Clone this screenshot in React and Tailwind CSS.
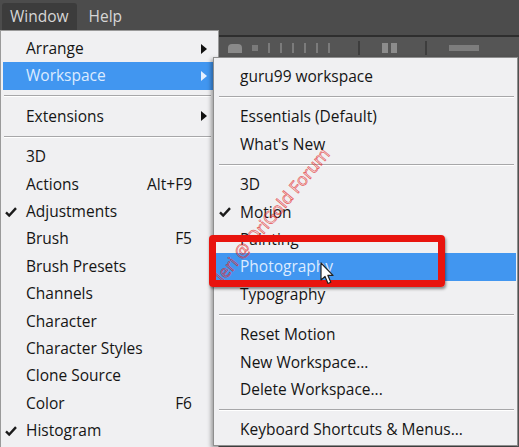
import React from 'react';

const font = { fontFamily: '"Open Sans", "Noto Sans", sans-serif' };

const mainItems = [
  { label: 'Arrange', sub: true },
  { label: 'Workspace', sub: true, active: true },
  'sep',
  { label: 'Extensions', sub: true },
  'sep',
  { label: '3D' },
  { label: 'Actions', key: 'Alt+F9' },
  { label: 'Adjustments', checked: true },
  { label: 'Brush', key: 'F5' },
  { label: 'Brush Presets' },
  { label: 'Channels' },
  { label: 'Character' },
  { label: 'Character Styles' },
  { label: 'Clone Source' },
  { label: 'Color', key: 'F6' },
  { label: 'Histogram', checked: true },
];

const workspaceItems = [
  { label: 'guru99 workspace' },
  'sep',
  { label: 'Essentials (Default)' },
  { label: "What's New" },
  'sep',
  { label: '3D' },
  { label: 'Motion', checked: true },
  { label: 'Painting' },
  { label: 'Photography', active: true },
  { label: 'Typography' },
  'sep',
  { label: 'Reset Motion' },
  { label: 'New Workspace...' },
  { label: 'Delete Workspace...' },
  'sep',
  { label: 'Keyboard Shortcuts & Menus...' },
];

function Check({ light, pos }) {
  return (
    <svg width="12" height="11" viewBox="0 0 12 11" className={`absolute ${pos} top-1/2 -translate-y-1/2`}>
      <path d="M1 5.8 L4.2 9 L11 1.6" fill="none" stroke={light ? '#eaf2ff' : '#1b1b1b'} strokeWidth="2.4" />
    </svg>
  );
}

function Arrow({ light }) {
  return (
    <svg width="6" height="10" viewBox="0 0 6 10">
      <path d="M0 0 L6 5 L0 10 Z" fill={light ? '#e6f0ff' : '#111'} />
    </svg>
  );
}

function Separator({ inset }) {
  return (
    <div className={`h-[13px] flex items-center ${inset}`}>
      <div className="w-full border-t border-[#a7a7a9] border-b border-b-white" />
    </div>
  );
}

function Row({ item, main }) {
  return (
    <div
      className={`relative flex items-center h-[27.4px] text-[15.5px] ${main ? 'pl-[23px]' : 'pl-[26px]'} ${
        item.active ? 'bg-[#4196f0] text-[#dcebff]' : 'text-[#151515]'
      }`}
    >
      {item.checked && <Check light={item.active} pos={main ? 'left-[2px]' : 'left-[5px]'} />}
      <span className="flex-1 whitespace-nowrap">{item.label}</span>
      {item.key && <span className="whitespace-nowrap">{item.key}</span>}
      {main && (
        <span className="w-[24px] flex items-center pl-[9px]">{item.sub && <Arrow light={item.active} />}</span>
      )}
    </div>
  );
}

export default function App() {
  return (
    <div className="relative w-[519px] h-[447px] overflow-hidden bg-[#545454]" style={font}>
      {/* menu bar */}
      <div className="h-[35px] bg-[#4c4c4c] flex items-start pt-[3px] pl-[2px] gap-[6px] text-[15.5px] text-[#d6d6d6]">
        <div className="h-[27px] px-[8px] flex items-center bg-[#3c3c3c] rounded-t-[3px]">Window</div>
        <div className="h-[27px] px-[6px] flex items-center">Help</div>
      </div>
      <div className="h-[2px] bg-[#2e2e2e]" />

      {/* options bar, mostly hidden behind the menus */}
      <div className="h-[22px] bg-[#555555] flex items-center pl-[228px] gap-[10px]">
        <div className="w-[14px] h-[9px] bg-[#8a8a8a] rounded-t-[4px]" />
        <div className="w-[6px] h-[6px] bg-[#7a7a7a]" />
        <div className="w-[14px] h-[10px] border-x-2 border-[#7b7b7b]" />
        <div className="w-[14px] h-[10px] border-x-2 border-[#7b7b7b]" />
        <div className="w-[14px] h-[10px] border-x-2 border-[#7b7b7b]" />
        <div className="w-[2px] h-[14px] bg-[#3d3d3d] ml-[18px]" />
        <div className="w-[6px] h-[10px] bg-[#8c8c8c] ml-[12px]" />
        <div className="w-[6px] h-[10px] bg-[#8c8c8c] -ml-[7px]" />
        <div className="w-[2px] h-[14px] bg-[#3d3d3d] ml-[18px]" />
        <div className="w-[30px] h-[6px] bg-[#7d7d7d] ml-[12px]" />
      </div>

      {/* Window menu */}
      <div className="absolute left-0 top-[30px] w-[219px] h-[420px] bg-[#f0f0f2] border border-[#9a9a9a] pt-[4px] px-[2px]">
        {mainItems.map((item, i) =>
          item === 'sep' ? <Separator key={i} inset="pl-[1px] pr-[5px]" /> : <Row key={i} item={item} main />
        )}
      </div>

      {/* Workspace submenu */}
      <div className="absolute left-[213px] top-[57px] w-[305px] h-[389px] bg-[#f0f0f2] border border-[#8e8e8e] shadow-[-2px_2px_4px_rgba(0,0,0,0.35)] pt-[5px] pr-[1px]">
        {workspaceItems.map((item, i) =>
          item === 'sep' ? <Separator key={i} inset="pl-[5px] pr-[2px]" /> : <Row key={i} item={item} />
        )}
      </div>

      {/* watermark */}
      <div className="absolute left-[162px] top-[202px] w-[220px] text-center text-[17px] whitespace-nowrap -rotate-[50deg] text-transparent [-webkit-text-stroke:0.7px_rgba(228,40,40,0.75)]">
        Jeri @ OriGold Forum
      </div>

      {/* callout box */}
      <div className="absolute left-[209px] top-[235px] w-[236px] h-[52px] border-[7px] border-[#e8140e] rounded-[4px] shadow-[1px_2px_3px_rgba(0,0,0,0.45)]" />

      {/* mouse pointer */}
      <svg className="absolute left-[320px] top-[262px]" width="16" height="24" viewBox="0 0 16 24">
        <path d="M1 1 L1 18 L5 14.5 L8 21.5 L10.8 20.3 L7.9 13.4 L13 13.4 Z" fill="#fff" stroke="#222" strokeWidth="1.2" strokeLinejoin="round" />
      </svg>
    </div>
  );
}
